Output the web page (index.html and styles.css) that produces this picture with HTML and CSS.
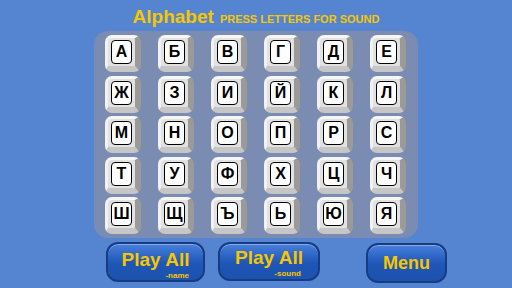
FILE: index.html
```html
<!DOCTYPE html>
<html>
<head>
<meta charset="utf-8">
<link rel="stylesheet" href="styles.css">
</head>
<body>
<div class="page">
  <div class="title"><span class="big">Alphabet</span><span class="small">PRESS LETTERS FOR SOUND</span></div>
  <div class="panel">
    <div class="key"><span class="lbl">А</span></div>
    <div class="key"><span class="lbl">Б</span></div>
    <div class="key"><span class="lbl">В</span></div>
    <div class="key"><span class="lbl">Г</span></div>
    <div class="key"><span class="lbl">Д</span></div>
    <div class="key"><span class="lbl">Е</span></div>
    <div class="key"><span class="lbl">Ж</span></div>
    <div class="key"><span class="lbl">З</span></div>
    <div class="key"><span class="lbl">И</span></div>
    <div class="key"><span class="lbl">Й</span></div>
    <div class="key"><span class="lbl">К</span></div>
    <div class="key"><span class="lbl">Л</span></div>
    <div class="key"><span class="lbl">М</span></div>
    <div class="key"><span class="lbl">Н</span></div>
    <div class="key"><span class="lbl">О</span></div>
    <div class="key"><span class="lbl">П</span></div>
    <div class="key"><span class="lbl">Р</span></div>
    <div class="key"><span class="lbl">С</span></div>
    <div class="key"><span class="lbl">Т</span></div>
    <div class="key"><span class="lbl">У</span></div>
    <div class="key"><span class="lbl">Ф</span></div>
    <div class="key"><span class="lbl">Х</span></div>
    <div class="key"><span class="lbl">Ц</span></div>
    <div class="key"><span class="lbl">Ч</span></div>
    <div class="key"><span class="lbl">Ш</span></div>
    <div class="key"><span class="lbl">Щ</span></div>
    <div class="key"><span class="lbl">Ъ</span></div>
    <div class="key"><span class="lbl">Ь</span></div>
    <div class="key"><span class="lbl">Ю</span></div>
    <div class="key"><span class="lbl">Я</span></div>
  </div>
  <div class="buttons">
    <div class="btn btn-name"><span class="main">Play All</span><span class="sub">-name</span></div>
    <div class="btn btn-sound"><span class="main">Play All</span><span class="sub">-sound</span></div>
    <div class="btn btn-menu"><span class="main menu">Menu</span></div>
  </div>
</div>
</body>
</html>
```
FILE: styles.css
```css
html, body {
  margin: 0;
  padding: 0;
}
body {
  width: 512px;
  height: 288px;
  background: #5585d0;
  overflow: hidden;
  font-family: "Liberation Sans", Arial, sans-serif;
}
.page {
  display: flex;
  flex-direction: column;
  align-items: center;
}
.title {
  display: flex;
  align-items: baseline;
  gap: 6px;
  color: #f7c600;
  font-weight: bold;
  height: 31px;
  padding-top: 6px;
  box-sizing: border-box;
  line-height: 22px;
}
.title .big {
  font-size: 19px;
}
.title .small {
  font-size: 11px;
}
.panel {
  width: 324px;
  height: 207px;
  box-sizing: border-box;
  background: #7a8cb1;
  border-radius: 14px;
  padding: 4px 12px 0 11px;
  display: grid;
  grid-template-columns: repeat(6, 36px);
  grid-auto-rows: 37px;
  column-gap: 17px;
  row-gap: 3.5px;
}
.key {
  box-sizing: border-box;
  width: 36px;
  height: 37px;
  border-radius: 7px;
  background: #e2e2e2;
  border-left: 3px solid #f2f2f2;
  border-top: 3px solid #f6f6f6;
  border-right: 6px solid #9a9a9a;
  border-bottom: 6px solid #c6c6c6;
  display: flex;
  align-items: center;
  justify-content: center;
}
.lbl {
  box-sizing: border-box;
  width: 21px;
  height: 24px;
  background: #fff;
  border: 1.5px solid #000;
  border-radius: 4px;
  display: flex;
  align-items: center;
  justify-content: center;
  font-weight: bold;
  font-size: 16px;
  color: #000;
  line-height: 1;
}
.buttons {
  width: 512px;
  display: flex;
  padding-left: 106px;
  box-sizing: border-box;
  margin-top: 4px;
}
.btn {
  box-sizing: border-box;
  height: 40px;
  border-radius: 12px;
  border: 2px solid #163c84;
  background: linear-gradient(#4a80da 0%, #3068c8 30%, #1f55b4 55%, #1d52ae 100%);
  box-shadow: inset 0 1px 0 rgba(255,255,255,0.35);
  color: #f7c600;
  font-weight: bold;
  display: flex;
  flex-direction: column;
  align-items: center;
  justify-content: center;
  padding-top: 4px;
}
.btn-name {
  width: 99px;
}
.btn-sound {
  width: 102px;
  height: 39px;
  margin-left: 13px;
  padding-top: 2px;
}
.btn-menu {
  width: 81px;
  margin-left: 46px;
  margin-top: 1px;
  padding-top: 0;
}
.main {
  font-size: 19px;
  line-height: 22px;
}
.main.menu {
  font-size: 18px;
}
.sub {
  font-size: 8px;
  line-height: 9px;
  align-self: flex-end;
  margin-right: 14px;
}
.btn-sound .sub {
  margin-right: 17px;
}
```
